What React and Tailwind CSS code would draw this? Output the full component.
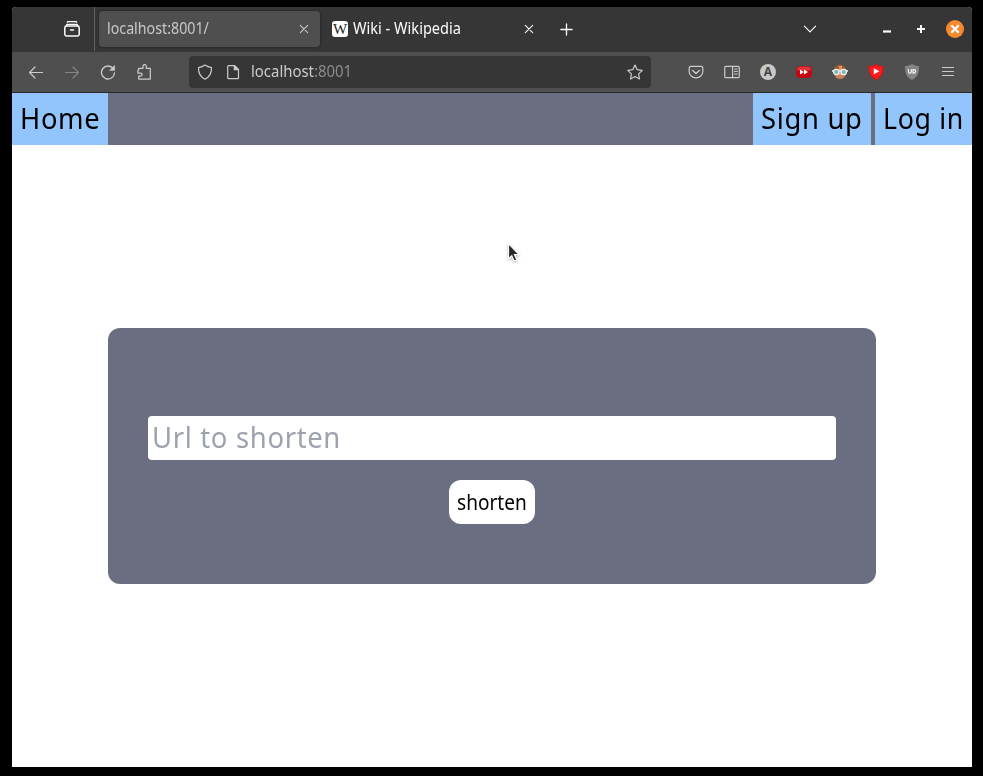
import { useLayoutEffect, useRef, useState } from "react";

// Text that is condensed or stretched to the width of its box.
function FitText({ className = "", children }) {
  const box = useRef(null);
  const inner = useRef(null);
  const [scale, setScale] = useState(1);
  useLayoutEffect(() => {
    setScale(box.current.clientWidth / inner.current.offsetWidth);
  }, []);
  return (
    <span ref={box} className={`block shrink-0 whitespace-nowrap ${className}`}>
      <span ref={inner} className="inline-block origin-left" style={{ transform: `scaleX(${scale})` }}>
        {children}
      </span>
    </span>
  );
}

function Icon({ className = "", children, size = "size-4" }) {
  return (
    <svg
      viewBox="0 0 16 16"
      fill="none"
      stroke="currentColor"
      strokeWidth="1.2"
      strokeLinecap="round"
      strokeLinejoin="round"
      className={`block shrink-0 ${size} ${className}`}
    >
      {children}
    </svg>
  );
}

function CloseIcon({ className }) {
  return (
    <Icon className={className}>
      <path d="M4.3 4.3l7.4 7.4M11.7 4.3l-7.4 7.4" strokeWidth="1.1" />
    </Icon>
  );
}

function TabBar() {
  return (
    <div className="flex h-[45px] items-center rounded-t-[4px] bg-[#363636] pb-px text-[#fbfbfb]">
      <div className="flex h-full w-[83px] items-center border-r border-[#606060] pl-[52px]">
        <Icon>
          <path d="M3.4 1.1C3.6.7 4 .6 4.4.6h7.2c.4 0 .8.1 1 .5" strokeWidth="1.4" />
          <path d="M2 5l1-1.6h10L14 5" strokeWidth="1.3" />
          <rect x=".8" y="5" width="14.4" height="10" rx="1.7" strokeWidth="1.5" />
          <path d="M6.5 9h3" strokeWidth="1.5" />
        </Icon>
      </div>
      <div className="ml-1 flex h-9 w-[221px] items-center rounded bg-[#4f4f4f] pr-2 pl-2 text-[#c8c8c8] shadow-[0_0_3px_rgba(0,0,0,0.45)]">
        <FitText className="-mt-0.5 w-[102px] text-[15.5px] leading-5">localhost:8001/</FitText>
        <CloseIcon className="ml-auto" />
      </div>
      <div className="ml-3 flex h-9 w-[205px] items-center">
        <span className="flex size-4 items-center justify-center overflow-hidden rounded-[3px] bg-white font-['Liberation_Serif',serif] text-[15px] leading-4 text-[#222]">
          <FitText className="w-[14px]">W</FitText>
        </span>
        <FitText className="-mt-0.5 ml-[5px] w-[108px] text-[15.5px] leading-5">Wiki - Wikipedia</FitText>
        <CloseIcon className="ml-auto" />
      </div>
      <Icon className="ml-[21px]">
        <path d="M8.500 2.900v11.200M2.900 8.500h11.200" strokeWidth="1.3" />
      </Icon>
      <Icon className="ml-auto">
        <path d="M2.4 5.2L8 10.8l5.6-5.6" strokeWidth="1.2" />
      </Icon>
      <Icon className="ml-[61px]">
        <path d="M4 10.5h8" strokeWidth="2.2" strokeLinecap="butt" />
      </Icon>
      <Icon className="ml-[18px]">
        <path d="M8 4v8M4 8h8" strokeWidth="2" strokeLinecap="butt" />
      </Icon>
      <span className="mr-2 ml-[17px] flex size-[18px] items-center justify-center rounded-full bg-[#f58b2e]">
        <Icon>
          <path d="M4.3 4.3l7.4 7.4M11.7 4.3l-7.4 7.4" strokeWidth="2.3" strokeLinecap="butt" />
        </Icon>
      </span>
    </div>
  );
}

function Extensions() {
  return (
    <div className="flex items-center gap-5">
      <Icon>
        <path d="M2.6 2.3h10.8c.8 0 1.4.6 1.4 1.4V7.500a6.800 6.400 0 0 1-13.600 0V3.700c0-.8.6-1.400 1.400-1.400z" />
        <path d="M4.700 6.500L8 9.500l3.300-3" strokeWidth="1.4" />
      </Icon>
      <Icon>
        <rect x=".7" y="2.300" width="14.600" height="11.400" rx="1.300" />
        <path d="M8.600 2.300v11.400M10.600 5h2.700M10.600 7.500h2.700M10.600 10h2.700" />
      </Icon>
      <span className="flex size-4 items-center justify-center rounded-full bg-[#c8c8c8] text-[12px] leading-4 font-bold text-[#464646]">
        A
      </span>
      <Icon>
        <path d="M3 2.200Q8 1.700 13 2.200 15.500 2.500 15.800 5 16.200 8 15.800 11 15.500 13.500 13 13.800 8 14.400 3 13.800.5 13.500.2 11-.2 8 .2 5 .5 2.500 3 2.200z" fill="#c30710" stroke="none" />
        <path d="M1 6.500C1 3.800 2.500 2.800 4 2.800h8c1.700 0 3 1 3 3.700z" fill="#df3538" stroke="none" />
        <path d="M4 5.500L8 8l-4 2.500zM8 5.500L12 8l-4 2.500z" fill="#fff" stroke="none" />
      </Icon>
      <Icon>
        <ellipse cx="8" cy="8.300" rx="6.200" ry="7" fill="#b97a58" stroke="none" />
        <path d="M2.300 5C3.300 1.500 5.600.7 8 .7s4.700.8 5.700 4.300z" fill="#9b5c35" stroke="none" />
        <path d="M7 2h3v4H7zM7 9h2v3H7z" fill="#e8935b" stroke="none" />
        <path d="M.4 7h15.200" stroke="#eee" strokeWidth="1.500" />
        <circle cx="4.300" cy="8" r="2.700" fill="#75b5be" stroke="#f0f0ee" strokeWidth="1.300" />
        <circle cx="11.700" cy="8" r="2.700" fill="#75b5be" stroke="#f0f0ee" strokeWidth="1.300" />
        <path d="M5.500 13.200h5" stroke="#e7814d" />
      </Icon>
      <Icon>
        <path d="M8 0c2.300 1.600 4.800 1.900 7.600 1.900C15.900 8.700 13.800 13.300 8 16 2.200 13.300.1 8.700.4 1.900 3.200 1.900 5.700 1.600 8 0z" fill="#d8161b" stroke="none" />
        <path d="M8 1.500c2 1.200 4 1.500 6.200 1.600C14.100 8.500 12.500 12.200 8 14.500 3.500 12.200 1.900 8.500 1.800 3.100 4 3 6 2.700 8 1.500z" fill="#ff1c20" stroke="none" />
        <path d="M5.800 4.300L11.400 7.300l-5.600 3z" fill="#fff" stroke="none" />
      </Icon>
      <Icon>
        <path d="M8 0c2.200 1.600 4.300 2 7 2 0 7-1.200 11-7 14C2.200 13 1 9 1 2c2.700 0 4.800-.4 7-2z" fill="#858585" stroke="none" />
        <path d="M4.500 5.500v2.200a1.400 1.400 0 0 0 2.800 0V5.500M9 5.500v3.600h.8a1.800 1.800 0 0 0 0-3.600z" stroke="#fff" strokeWidth="1.100" />
      </Icon>
      <Icon>
        <path d="M2.500 3.500h11M2.500 7.500h11M2.500 11.500h11" />
      </Icon>
    </div>
  );
}

function Toolbar() {
  return (
    <div className="flex h-[41px] items-center border-b border-[#292929] bg-[#4f4f4f] pr-4 pl-4 text-[#cbcbcb]">
      <div className="flex items-center gap-5">
        <Icon>
          <path d="M14.500 8.500H1.500M7 3L1.500 8.500 7 14" />
        </Icon>
        <Icon className="text-[#858585]">
          <path d="M1.500 8.500h13M9 3l5.500 5.500L9 14" />
        </Icon>
        <Icon>
          <path d="M13.300 4.700A6.500 6.500 0 1 0 14.500 9" strokeWidth="1.300" />
          <path d="M14.600 1.800v4.500h-4.500z" fill="currentColor" strokeWidth=".7" />
        </Icon>
        <Icon>
          <path d="M2.300 6.300V4.500h4.300V2.400c0-2.200 3.200-2.200 3.200 0v2.100h4.100v10.800H2.300v-3h1.800c2.200 0 2.200-3 0-3H1.500V6.300z" transform="translate(.4 -.2)" />
        </Icon>
      </div>
      <div className="ml-[37px] flex h-8 w-[462px] items-center rounded bg-[#363636] px-2">
        <Icon>
          <path d="M8 1.100c2 1.400 4 2.100 6.500 2.500.2 5.200-1.800 9.400-6.500 11.700C3.300 13 1.300 8.800 1.500 3.600 4 3.200 6 2.500 8 1.100z" />
        </Icon>
        <Icon className="ml-3">
          <path d="M3.600 1.600h6L13.500 5.500v8.200c0 .5-.4.900-.9.900h-9c-.5 0-.9-.4-.9-.9V2.500c0-.5.400-.9.900-.9z" />
          <path d="M9.300 1.600v4.100h4.100z" fill="currentColor" />
        </Icon>
        <FitText className="-mt-0.5 ml-[10px] w-[101px] text-[15.5px] leading-5">
          localhost<span className="text-[#8c8c8c]">:8001</span>
        </FitText>
        <Icon className="ml-auto">
          <path d="M8 1l2.200 4.700 5.100.7-3.700 3.500.9 5.100L8 12.500 3.500 15l.9-5.100L.7 6.400l5.100-.7z" />
        </Icon>
      </div>
      <div className="ml-auto">
        <Extensions />
      </div>
    </div>
  );
}

function Nav() {
  return (
    <nav className="flex h-[52px] gap-1 bg-[#6b6e80] text-[29px] leading-9 tracking-wide text-black">
      <a className="bg-[#93c5fd] px-2 py-[7px]">
        <FitText className="w-20">Home</FitText>
      </a>
      <a className="ml-auto bg-[#93c5fd] px-2 py-[7px]">
        <FitText className="w-[102px]">Sign up</FitText>
      </a>
      <a className="bg-[#93c5fd] px-2 py-[7px]">
        <FitText className="w-[81px]">Log in</FitText>
      </a>
    </nav>
  );
}

function ShortenForm() {
  return (
    <div className="flex h-64 w-[768px] flex-col items-center justify-center gap-5 rounded-xl bg-[#6b6e80] px-10 pt-7">
      <div className="h-11 w-full rounded bg-white px-1 py-[3px] text-[29px] leading-9 tracking-wide text-[#9ca3af]">
        <FitText className="w-[189px]">Url to shorten</FitText>
      </div>
      <button className="h-11 rounded-xl bg-white px-2 pb-px text-left text-[21.5px] leading-7 text-black">
        <FitText className="w-[70px]">shorten</FitText>
      </button>
    </div>
  );
}

export default function App() {
  return (
    <div className="relative h-[776px] w-[983px] overflow-hidden bg-black pt-[7px] pl-3 font-['Noto_Sans',sans-serif]">
      <div className="flex h-[760px] w-[960px] flex-col rounded-t-[4px] bg-white">
        <TabBar />
        <Toolbar />
        <Nav />
        <main className="flex flex-1 justify-center pt-[183px]">
          <ShortenForm />
        </main>
      </div>
      <svg viewBox="0 0 16 22" className="absolute top-[242px] left-[506px] h-[22px] w-4 drop-shadow-[0_1px_1px_rgba(0,0,0,0.3)]">
        <path d="M2.500 1.500v15.200l3.300-3 2.400 5.500 2.700-1.200-2.400-5.400h4.600z" fill="#292929" stroke="#fff" strokeWidth="1.200" />
      </svg>
    </div>
  );
}
